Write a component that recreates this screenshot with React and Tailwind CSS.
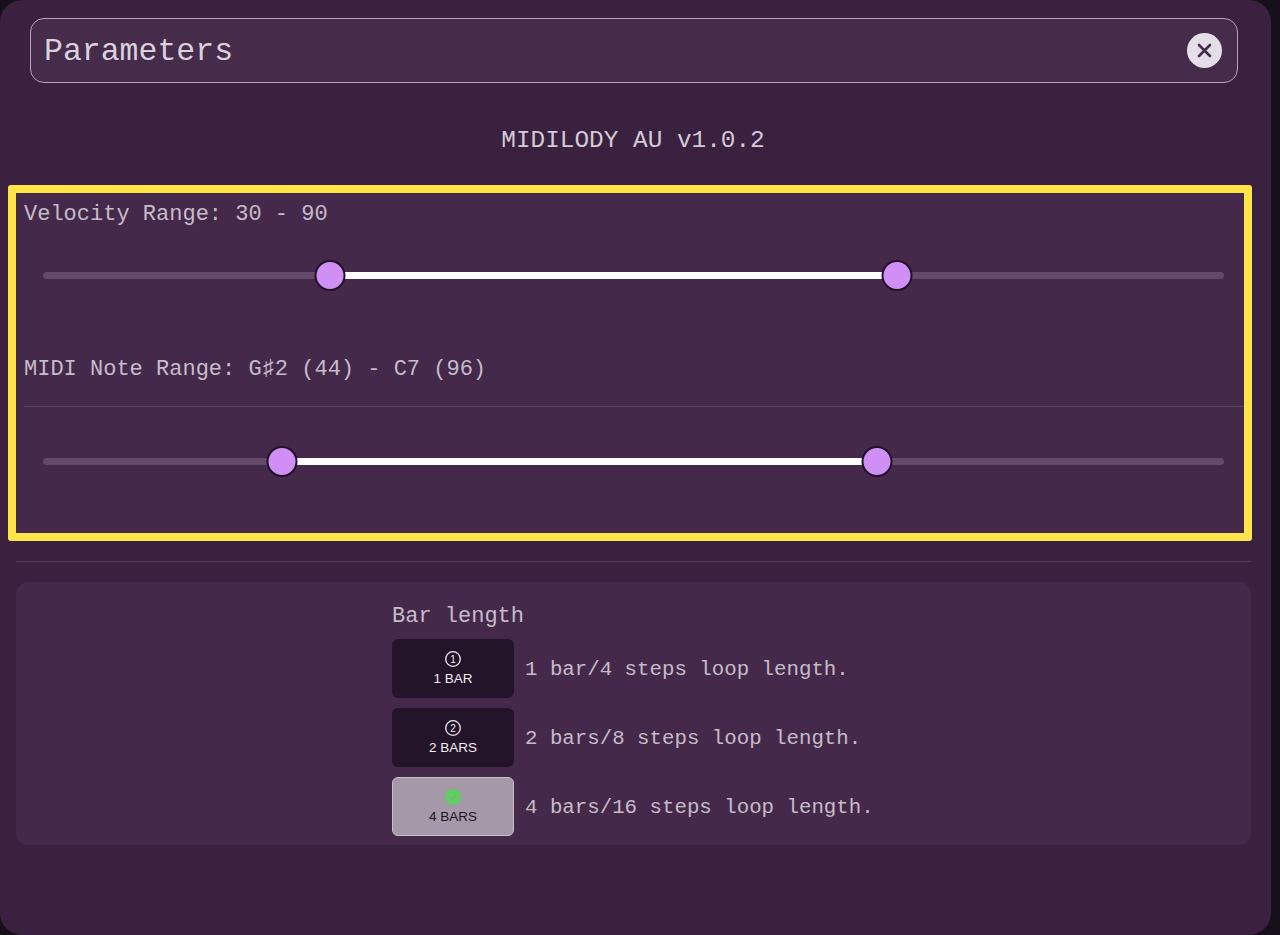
import React from 'react';

const mono = "font-['Liberation_Mono','DejaVu_Sans_Mono',monospace]";

const Slider = ({ low, high }) => (
    <div className="relative mx-[19px] h-[7px] w-[1181px] rounded-full bg-[#634a68]">
        <div className="absolute top-0 h-[7px] bg-white" style={{ left: low, width: high - low }} />
        <div className="absolute top-[-12px] h-[31px] w-[31px] -translate-x-1/2 rounded-full border-2 border-[#21122a] bg-[#d08ff5]" style={{ left: low }} />
        <div className="absolute top-[-12px] h-[31px] w-[31px] -translate-x-1/2 rounded-full border-2 border-[#21122a] bg-[#d08ff5]" style={{ left: high }} />
    </div>
);

const CircledNumber = ({ n }) => (
    <svg width="16" height="16" viewBox="0 0 16 16" fill="none">
        <circle cx="8" cy="8" r="7.3" stroke="#f2eef3" strokeWidth="1.3" />
        <text x="8" y="11.6" textAnchor="middle" fontSize="10" fill="#f2eef3" fontFamily="Liberation Sans, sans-serif">{n}</text>
    </svg>
);

const GreenCheck = () => (
    <svg width="16" height="16" viewBox="0 0 16 16" fill="none">
        <circle cx="8" cy="8" r="8" fill="#5fcf5f" />
        <path d="M5 8.3l2.1 2.1L11 6" stroke="#8ba88c" strokeWidth="1.4" strokeLinecap="round" strokeLinejoin="round" />
    </svg>
);

const BarOption = ({ icon, label, text, active }) => (
    <div className="flex items-center gap-[11px]">
        <div className={`flex h-[59px] w-[122px] flex-col items-center justify-center rounded-md font-['Liberation_Sans',Arial,sans-serif] text-[13.5px] leading-[16px] ${active ? 'border border-[#c9bfca] bg-[#a598a8] text-[#1f1522]' : 'bg-[#24142a] text-[#f0ecf1]'}`}>
            <div className="mb-[4px] h-4">{icon}</div>
            <span>{label}</span>
        </div>
        <span className="pt-[3px] text-[20.75px] leading-none text-[#c6bcc9]">{text}</span>
    </div>
);

export default function App() {
    return (
        <div className={`h-[935px] w-[1280px] overflow-hidden bg-[#17101a] ${mono}`}>
            <div className="h-[935px] w-[1271px] rounded-[22px] bg-[#3a2140] pt-[18px]">
                <div className="mx-[30px] flex h-[65px] w-[1208px] items-center justify-between rounded-[14px] border border-[#b5a7b8] bg-[#452c4a] pl-[13px] pr-[15px]">
                    <span className="pt-[2px] text-[31.5px] leading-none text-[#d9d1dc]">Parameters</span>
                    <div className="flex h-[35px] w-[35px] items-center justify-center rounded-full bg-[#e4dfe6]">
                        <svg width="17" height="17" viewBox="0 0 17 17" fill="none">
                            <path d="M3 3l11 11M14 3L3 14" stroke="#452c4a" strokeWidth="2.6" strokeLinecap="round" />
                        </svg>
                    </div>
                </div>

                <div className="mt-[44px] w-[1266px] text-center text-[24.4px] leading-[28px] text-[#d3cad6]">MIDILODY AU v1.0.2</div>

                <div className="ml-2 mt-[30px] h-[356px] w-[1244px] rounded-[3px] border-[8px] border-[#fde448] bg-[#44294a] pl-2 text-[#c6bcc9]">
                    <div className="pt-[10px] text-[22px] leading-[24px]">Velocity Range: 30 - 90</div>
                    <div className="mt-[45px]"><Slider low={287} high={854} /></div>
                    <div className="mt-[79px] text-[22px] leading-[24px]">MIDI Note Range: G♯2 (44) - C7 (96)</div>
                    <div className="mt-[24px] h-px bg-[#5a4160]" />
                    <div className="mt-[51px]"><Slider low={239} high={834} /></div>
                </div>

                <div className="ml-4 mt-5 h-px w-[1235px] bg-[#523a58]" />

                <div className="ml-4 mt-5 h-[263px] w-[1235px] rounded-xl bg-[#44294a] pl-[376px] pt-[23px]">
                    <div className="text-[22px] leading-[24px] text-[#c6bcc9]">Bar length</div>
                    <div className="mt-[10px] flex flex-col gap-[10px]">
                        <BarOption icon={<CircledNumber n="1" />} label="1 BAR" text="1 bar/4 steps loop length." />
                        <BarOption icon={<CircledNumber n="2" />} label="2 BARS" text="2 bars/8 steps loop length." />
                        <BarOption icon={<GreenCheck />} label="4 BARS" text="4 bars/16 steps loop length." active />
                    </div>
                </div>
            </div>
        </div>
    );
}
